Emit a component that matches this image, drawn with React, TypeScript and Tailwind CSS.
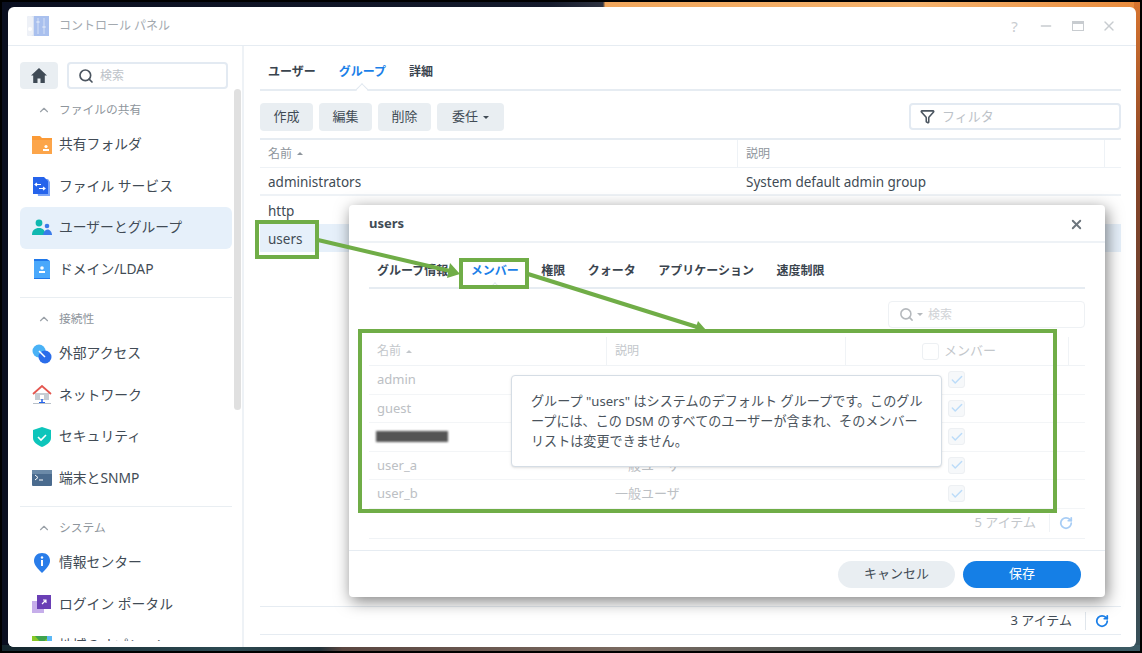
import { Search, ChevronUp, X, Minus, Filter, RotateCw, Check } from 'lucide-react';

const FONT = "font-['Noto_Sans','Noto_Sans_CJK_JP',sans-serif]";

const HomeGlyph = () => (
  <svg width="16" height="15" viewBox="0 0 16 15">
    <path d="M8 0L0 7.500h2.200V15h4.300v-4.500h3V15h4.300V7.500H16z" fill="#3f4a55" />
  </svg>
);
const FolderIcon = () => (
  <svg width="20" height="20" viewBox="0 0 20 20">
    <path d="M0 1h8l2 2h10v16H0z" fill="#fb9a36" />
    <path d="M0 5h20v14H0z" fill="#fca54a" />
    <circle cx="14" cy="11.500" r="1.600" fill="#fff" />
    <rect x="11" y="14" width="6" height="2" fill="#fff" />
  </svg>
);
const FileServiceIcon = () => (
  <svg width="20" height="20" viewBox="0 0 20 20">
    <path d="M4 3h12l2 3v14H6z" fill="#7ea6f7" />
    <path d="M1 1h11l4 4v13H1z" fill="#2563eb" />
    <path d="M5 7l-2 1.500L5 10M3 8.500h6M11 11l2 1.500-2 1.500M13 12.500H7" stroke="#fff" strokeWidth="1.100" fill="none" />
  </svg>
);
const UsersIcon = () => (
  <svg width="20" height="20" viewBox="0 0 20 20">
    <circle cx="7" cy="5" r="3.400" fill="#10b8b0" />
    <path d="M0 17c0-5 3-7 7-7s6 2 6.500 7z" fill="#10b8b0" />
    <circle cx="15" cy="8" r="2.300" fill="#3a7bea" />
    <path d="M11 17c.5-3 2-5.500 4.500-5.500S20 14 20 17z" fill="#3a7bea" />
  </svg>
);
const DomainIcon = () => (
  <svg width="20" height="20" viewBox="0 0 20 20">
    <path d="M2 0h13l3 2v18H2z" fill="#1f78ea" />
    <rect x="2" y="2" width="16" height="17" fill="#4aa8fb" />
    <circle cx="10" cy="9" r="1.800" fill="#fff" />
    <rect x="7" y="12" width="6" height="2" fill="#fff" />
  </svg>
);
const ExternalIcon = () => (
  <svg width="20" height="20" viewBox="0 0 20 20">
    <circle cx="7" cy="7" r="6.500" fill="#4ab2f6" />
    <circle cx="13" cy="13" r="6.500" fill="#2a6dea" />
    <path d="M7 7l6 6" stroke="#fff" strokeWidth="1.500" />
  </svg>
);
const NetworkIcon = () => (
  <svg width="20" height="20" viewBox="0 0 20 20">
    <path d="M3 8h14v7H3z" fill="#c6ccd2" />
    <path d="M1 9l9-8 9 8" fill="none" stroke="#e4564f" strokeWidth="1.800" />
    <path d="M10 14v4" stroke="#2563eb" strokeWidth="1.500" />
    <rect x="7" y="17" width="6" height="2" fill="#2563eb" />
    <rect x="1" y="18" width="18" height="1" fill="#b8c0c8" />
    <rect x="8" y="10" width="4" height="4" fill="#fff" />
  </svg>
);
const ShieldIcon = () => (
  <svg width="20" height="20" viewBox="0 0 20 20">
    <path d="M10 0l9 3v8c0 4-4 7-9 9-5-2-9-5-9-9V3z" fill="#0dc5bb" />
    <path d="M6 10l3 3 5-5" stroke="#fff" strokeWidth="1.600" fill="none" />
  </svg>
);
const TerminalIcon = () => (
  <svg width="20" height="16" viewBox="0 0 20 16">
    <rect width="20" height="16" rx="1" fill="#4a6b8e" />
    <rect width="20" height="4" fill="#6b8aa8" />
    <path d="M3 5l3 2.500L3 10M7 10h4" stroke="#fff" strokeWidth="1" fill="none" />
  </svg>
);
const InfoIcon = () => (
  <svg width="20" height="20" viewBox="0 0 20 20">
    <path d="M10 0c5 0 8 3.500 8 8 0 4-4 8-8 12-4-4-8-8-8-12 0-4.500 3-8 8-8z" fill="#2a7de9" />
    <circle cx="10" cy="4.500" r="1.200" fill="#fff" />
    <rect x="9" y="7" width="2" height="6" fill="#fff" />
  </svg>
);
const LoginIcon = () => (
  <svg width="20" height="20" viewBox="0 0 20 20">
    <rect x="0" y="7" width="12" height="12" fill="#c6aeea" />
    <rect x="5" y="1" width="14" height="14" fill="#6a3fb5" />
    <path d="M10 10l4-4M11 6h3v3" stroke="#fff" strokeWidth="1.100" fill="none" />
  </svg>
);
const WebIcon = () => (
  <svg width="20" height="20" viewBox="0 0 20 20">
    <rect width="20" height="20" fill="#8ac926" />
    <path d="M3 0l7 8 7-8z" fill="#3fa34d" />
    <rect x="15" width="5" height="5" fill="#5bb8f5" />
  </svg>
);

const sections = [
  {
    title: 'ファイルの共有',
    items: [
      { label: '共有フォルダ', icon: <FolderIcon /> },
      { label: 'ファイル サービス', icon: <FileServiceIcon /> },
      { label: 'ユーザーとグループ', icon: <UsersIcon />, active: true },
      { label: 'ドメイン/LDAP', icon: <DomainIcon /> },
    ],
  },
  {
    title: '接続性',
    items: [
      { label: '外部アクセス', icon: <ExternalIcon /> },
      { label: 'ネットワーク', icon: <NetworkIcon /> },
      { label: 'セキュリティ', icon: <ShieldIcon /> },
      { label: '端末とSNMP', icon: <TerminalIcon /> },
    ],
  },
  {
    title: 'システム',
    items: [
      { label: '情報センター', icon: <InfoIcon /> },
      { label: 'ログイン ポータル', icon: <LoginIcon /> },
      { label: '地域のオプション', icon: <WebIcon /> },
    ],
  },
];

const Sidebar = () => (
  <div className="relative w-[236px] shrink-0 border-r-2 border-[#eef2f6] overflow-hidden pl-3 pt-4">
    <div className="flex gap-[9px] w-[208px]">
      <div className="w-[38px] h-[27px] rounded bg-[#e9eef2] flex items-center justify-center">
        <HomeGlyph />
      </div>
      <div className="flex-1 h-[27px] rounded border-2 border-[#e3eaf2] flex items-center pl-[9px] gap-[6px]">
        <Search size={16} strokeWidth={2.500} className="text-[#4b5560]" />
        <span className="text-[12px] text-[#bcc2c8]">検索</span>
      </div>
    </div>
    <div className="w-[212px] mt-[8px]">
      {sections.map((s, i) => (
        <div key={s.title} className={i > 0 ? 'border-t border-[#e9eef2] mt-[7px] pt-[8px]' : ''}>
          <div className="h-[26px] flex items-center pl-[17px] gap-[8px] text-[11.750px] text-[#8e959c]">
            <ChevronUp size={14} className="text-[#9aa1a8]" />
            {s.title}
          </div>
          <div className="mt-[1px]">
            {s.items.map((it) => (
              <div
                key={it.label}
                className={`h-[41.500px] flex items-center pl-3 rounded-md text-[13.800px] text-[#414b55] ${it.active ? 'bg-[#e6f0fa]' : ''}`}
              >
                <span className="w-[27px] flex shrink-0">{it.icon}</span>
                {it.label}
              </div>
            ))}
          </div>
        </div>
      ))}
    </div>
    <div className="absolute left-[226px] top-[43px] w-[7px] h-[321px] rounded bg-[#e0e0e0]" />
    <div className="absolute inset-x-0 bottom-0 h-[6px] bg-white" />
  </div>
);

const UnderTab = ({ label, active, caret }: { label: string; active?: boolean; caret?: boolean }) => (
  <span className={`relative font-semibold ${active ? 'text-[#1a7fe8]' : 'text-[#3a444e]'}`}>
    {label}
    {caret && (
      <span className="absolute left-1/2 -translate-x-1/2 -bottom-[13px] w-[9px] h-[9px] rotate-45 bg-white border-l border-t border-[#dfe7ef]" />
    )}
  </span>
);

const ToolButton = ({ label, caret, w }: { label: string; caret?: boolean; w: string }) => (
  <div className={`${w} h-[28px] rounded bg-[#e9eef2] flex items-center justify-center gap-[5px] text-[13px] text-[#414b55]`}>
    {label}
    {caret && <span className="w-0 h-0 border-x-[3px] border-x-transparent border-t-[3px] border-t-[#414b55]" />}
  </div>
);

const MainPane = () => (
  <div className="relative flex-1 min-w-0 pl-[16px] pr-[15px] flex flex-col">
    <div className="h-[45px] border-b-2 border-[#e6ecf2] flex items-center gap-[23px] pl-2 pt-[9px] text-[12px]">
      <UnderTab label="ユーザー" />
      <UnderTab label="グループ" active caret />
      <UnderTab label="詳細" />
    </div>
    <div className="flex gap-[6px] mt-[12px] items-start">
      <ToolButton label="作成" w="w-[53px]" />
      <ToolButton label="編集" w="w-[53px]" />
      <ToolButton label="削除" w="w-[53px]" />
      <ToolButton label="委任" caret w="w-[67px]" />
      <div className="ml-auto w-[212px] h-[27px] rounded border-2 border-[#e3eaf2] flex items-center pl-[9px] gap-[7px]">
        <Filter size={15} strokeWidth={2.500} className="text-[#4b5560]" />
        <span className="text-[13px] text-[#bcc2c8]">フィルタ</span>
      </div>
    </div>
    <div className="mt-[7px] border-t-2 border-[#e6ecf2] h-[30px] flex items-center text-[12px] text-[#8e959c] border-b border-b-[#eef2f6]">
      <div className="w-[478px] pl-2 flex items-center gap-[5px] h-full border-r border-[#eef2f6]">
        名前
        <span className="w-0 h-0 border-x-[3px] border-x-transparent border-b-[3px] border-b-[#8e959c]" />
      </div>
      <div className="w-[367px] pl-2 h-full flex items-center border-r border-[#eef2f6]">説明</div>
    </div>
    <div className="h-[28px] flex items-center text-[13.500px] text-[#414b55] border-b-2 border-[#eef2f6] pt-[2px]">
      <div className="w-[478px] pl-2">administrators</div>
      <div className="pl-2">System default admin group</div>
    </div>
    <div className="h-[28px] flex items-center pl-2 text-[13.500px] text-[#414b55] pt-[2px]">http</div>
    <div className="h-[28px] flex items-center pl-2 text-[13.500px] text-[#414b55] bg-[#e6f0fa] pt-[2px]">users</div>
    <div className="flex-1" />
    <div className="h-[29px] mb-[12px] border-y border-[#e6ecf2] flex items-center justify-end text-[13px] text-[#414b55] pt-px">
      3 アイテム
      <span className="w-px h-[18px] bg-[#e0e6ec] ml-[13px] mr-[9px]" />
      <RotateCw size={14} strokeWidth={3} className="text-[#1a7fe8] mr-3" />
    </div>
  </div>
);

const members = [
  { name: 'admin', desc: '' },
  { name: 'guest', desc: '' },
  { name: '', desc: '' },
  { name: 'user_a', desc: '一般ユーザ' },
  { name: 'user_b', desc: '一般ユーザ' },
];

const MemberTable = () => (
  <div className="relative mx-5 mt-[9px]">
    <div className="h-[29px] border-b border-[#f0f3f6] flex items-center text-[12px] text-[#c3c7cb]">
      <div className="w-[238px] h-full pl-2 flex items-center gap-[5px] border-r border-[#f0f3f6]">
        名前
        <span className="w-0 h-0 border-x-[3px] border-x-transparent border-b-[3px] border-b-[#c3c7cb]" />
      </div>
      <div className="w-[239px] h-full pl-2 flex items-center border-r border-[#f0f3f6]">説明</div>
      <div className="w-[223px] h-full flex items-center border-r border-[#f0f3f6] pl-[76px] gap-[5px] text-[13px]">
        <span className="w-[17px] h-[17px] rounded-[3px] border border-[#edf0f3]" />
        メンバー
      </div>
    </div>
    {members.map((m, i) => (
      <div key={i} className="h-[28.500px] flex items-center text-[13px] text-[#bcc0c4] border-b border-[#f3f5f7]">
        <div className="w-[238px] pl-2">
          {m.name || <div className="w-[72px] h-[11px] -ml-[1px] bg-[#555] blur-[1px]" />}
        </div>
        <div className="w-[239px] pl-2">{m.desc}</div>
        <div className="w-[223px] pl-[102px]">
          <span className="w-[17px] h-[17px] rounded-[3px] bg-[#f6f8fa] border border-[#edf0f3] flex items-center justify-center">
            <Check size={14} strokeWidth={2.500} className="text-[#bcdcf9]" />
          </span>
        </div>
      </div>
    ))}
    <div className="h-[30px] border-b border-[#f0f3f6] flex items-center justify-end text-[13px] text-[#c3c7cb]">
      5 アイテム
      <span className="w-px h-[18px] bg-[#f0f3f6] ml-[13px] mr-[9px]" />
      <RotateCw size={14} strokeWidth={3} className="text-[#a8cdf5] mr-[12px]" />
    </div>
    <div className="absolute left-[142px] top-[38px] w-[431px] h-[92px] bg-white border border-[#d5dde5] rounded shadow-sm pl-[19px] pr-[18px] pt-[15px] text-[13.100px] leading-[20px] text-[#4a535c]">
      グループ "users" はシステムのデフォルト グループです。このグループには、この DSM のすべてのユーザーが含まれ、そのメンバーリストは変更できません。
    </div>
  </div>
);

const Dialog = () => (
  <div className="absolute left-[341px] top-[198px] w-[756px] h-[392px] bg-white rounded shadow-[2px_4px_16px_rgba(0,0,0,0.5)] flex flex-col">
    <div className="h-[38px] shrink-0 border-b-2 border-[#eef2f6] flex items-center justify-between pl-5 pr-[21px] pt-[2px] text-[13px] font-bold text-[#414b55]">
      users
      <X size={15} strokeWidth={3} className="text-[#6c757d]" />
    </div>
    <div className="mx-5 h-[46px] shrink-0 border-b-2 border-[#e6ecf2] flex items-center pl-2 gap-[22.500px] pt-[12px] text-[12px]">
      <UnderTab label="グループ情報" />
      <UnderTab label="メンバー" active caret />
      <UnderTab label="権限" />
      <UnderTab label="クォータ" />
      <UnderTab label="アプリケーション" />
      <UnderTab label="速度制限" />
    </div>
    <div className="flex justify-end mx-5 mt-3">
      <div className="w-[197px] h-[27px] rounded border border-[#eef1f4] flex items-center pl-[10px] gap-[3px]">
        <Search size={15} strokeWidth={2.500} className="text-[#b5b9bd]" />
        <span className="w-0 h-0 border-x-[3px] border-x-transparent border-t-[3px] border-t-[#b5b9bd] mr-[2px]" />
        <span className="text-[12px] text-[#d0d3d6]">検索</span>
      </div>
    </div>
    <MemberTable />
    <div className="mt-auto h-[47px] border-t border-[#e6ecf2] flex items-center justify-end pr-6 gap-2 text-[13px]">
      <div className="w-[117px] h-[27px] rounded-full bg-[#e9eef2] text-[#414b55] flex items-center justify-center">キャンセル</div>
      <div className="w-[118px] h-[27px] rounded-full bg-[#157fe6] text-white flex items-center justify-center">保存</div>
    </div>
  </div>
);

const Annotations = () => (
  <>
    <div className="absolute left-[255px] top-[220px] w-[64px] h-[39px] border-[4px] border-[#70ad47]" />
    <div className="absolute left-[459px] top-[258px] w-[70px] h-[31px] border-[4px] border-[#70ad47]" />
    <div className="absolute left-[358px] top-[329px] w-[699px] h-[184px] border-[4px] border-[#70ad47]" />
    <svg className="absolute left-0 top-0 pointer-events-none" width="1142" height="653">
      <path d="M318 240L450 271" stroke="#70ad47" strokeWidth="4" />
      <path d="M460 274L450 263L447 278z" fill="#70ad47" />
      <path d="M528 274L697 327" stroke="#70ad47" strokeWidth="4" />
      <path d="M706 330L698 321L694 333z" fill="#70ad47" />
    </svg>
  </>
);

export default function App() {
  return (
    <div className={`relative w-[1142px] h-[653px] overflow-hidden pl-2 pt-[7px] bg-[#0a0f20] ${FONT}`}>
      {/* wallpaper showing around the window */}
      <div className="absolute left-0 right-0 top-0 h-[10px] bg-[linear-gradient(90deg,#0a0f20_0%,#141a2c_48%,#2d3240_52.800%,#f0a65c_53%,#f5b36e_80%,#e88a3c_100%)]" />
      <div className="absolute right-0 top-0 bottom-0 w-[8px] bg-[linear-gradient(180deg,#d9752f_0%,#8a4526_25%,#5a4038_60%,#35505a_100%)]" />
      <div className="absolute left-0 right-0 bottom-0 h-[8px] bg-[linear-gradient(90deg,#14262e_0%,#2c4a52_20%,#24333a_28%,#5a4640_30%,#7a6a60_55%,#4a5554_75%,#3a5a64_100%)]" />
      <div className="absolute inset-0 border-2 border-black" />
      <div className="relative w-[1128px] h-[640px] bg-white rounded-md flex flex-col overflow-hidden">
        <div className="h-[39px] shrink-0 border-b border-[#e6ecf2] flex items-center pl-[18px] pr-[12px]">
          <svg width="24" height="24" viewBox="0 0 24 24">
            <rect x="1" y="2" width="22" height="20" rx="2" fill="#d9e2f2" />
            <rect x="1" y="2" width="6" height="20" rx="2" fill="#eef1f7" />
            <rect x="8" y="2" width="15" height="20" fill="#a9c0ee" />
            <path d="M12 4v16M18 4v16" stroke="#d5e0f5" strokeWidth="1" />
            <rect x="10.500" y="7" width="3" height="2" fill="#d5e0f5" />
            <rect x="16.500" y="12" width="3" height="2" fill="#d5e0f5" />
            <circle cx="4" cy="15" r="2" fill="#fff" />
          </svg>
          <span className="ml-[9px] text-[12px] text-[#a3a9af]">コントロール パネル</span>
          <div className="ml-auto flex items-center text-[#c8ccd0]">
            <span className="w-[31px] text-center text-[15px] leading-none">?</span>
            <span className="w-[32px] flex justify-center"><Minus size={16} /></span>
            <span className="w-[31px] flex justify-center">
              <span className="w-[12px] h-[10px] border border-[#c8ccd0] border-t-[3px]" />
            </span>
            <span className="w-[31px] flex justify-center"><X size={16} /></span>
          </div>
        </div>
        <div className="flex flex-1 min-h-0">
          <Sidebar />
          <MainPane />
        </div>
        <Dialog />
      </div>
      <Annotations />
    </div>
  );
}
